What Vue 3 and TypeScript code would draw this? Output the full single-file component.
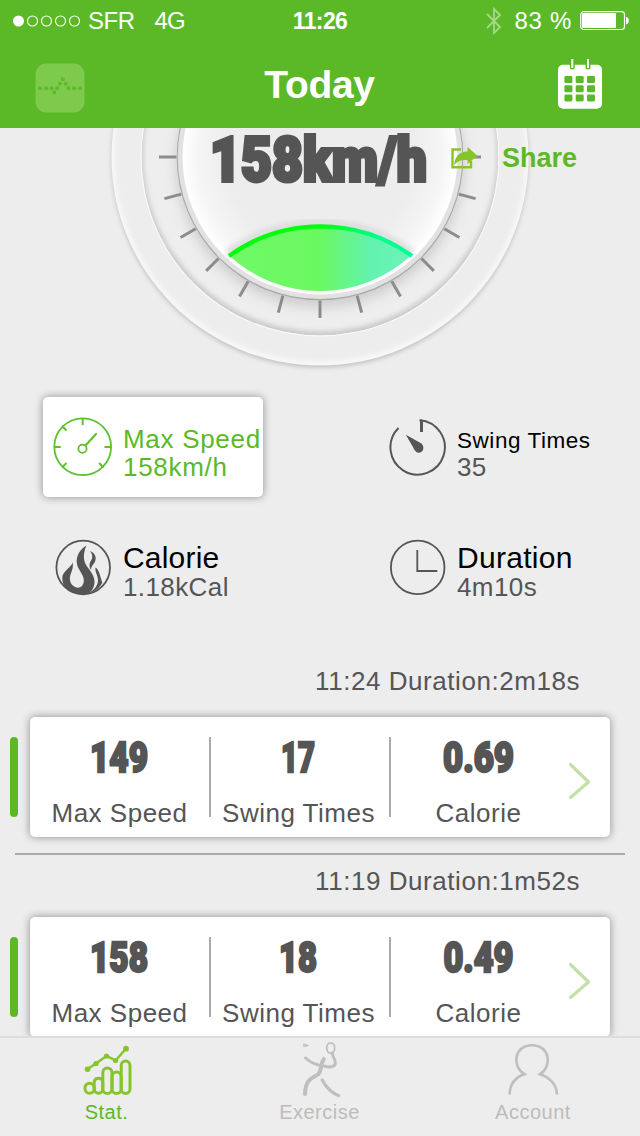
<script setup lang="ts">
interface Session {
  time: string
  duration: string
  speed: string
  speedWidth: number
  swings: string
  swingsWidth: number
  calorie: string
  calorieWidth: number
}

const sessions: Session[] = [
  { time: '11:24', duration: '2m18s', speed: '149', speedWidth: 58, swings: '17', swingsWidth: 34, calorie: '0.69', calorieWidth: 71 },
  { time: '11:19', duration: '1m52s', speed: '158', speedWidth: 58, swings: '18', swingsWidth: 38, calorie: '0.49', calorieWidth: 70 },
]

const ticks: number[] = Array.from({ length: 13 }, (_, i) => i * 15)

const pulse: number[][] = [
  [40, 88.3], [46, 88.3], [51.5, 88.3], [54.3, 92.6], [57.2, 88.3], [60, 83.8],
  [62.8, 79.3], [65.6, 83.8], [68.5, 88.3], [74.2, 88.3], [80, 88.3],
]
</script>

<template>
  <div class="phone">
    <header class="header">
      <div class="status">
        <div class="status-left">
          <svg width="68" height="14" viewBox="0 0 68 14">
            <circle cx="5.5" cy="7" r="5.5" fill="#fff" />
            <circle v-for="n in 4" :key="n" :cx="5.5 + n * 14" cy="7" r="5" fill="none" stroke="#fff" stroke-width="1.1" />
          </svg>
          <span class="carrier">SFR</span>
          <span class="network">4G</span>
        </div>
        <span class="clock">11:26</span>
        <div class="status-right">
          <svg class="bluetooth" width="16" height="28" viewBox="0 0 16 28">
            <path d="M1 7 L14 20 L8 26 V2 L14 8 L1 21" fill="none" stroke="#a4d98a" stroke-width="1.8" />
          </svg>
          <span class="percent">83 %</span>
          <svg width="50" height="20" viewBox="0 0 50 20">
            <rect x="0.7" y="0.7" width="43.8" height="17.8" rx="3" fill="none" stroke="#fff" stroke-width="1.2" />
            <rect x="2" y="2" width="34" height="15" rx="1" fill="#fff" />
            <path d="M46 6 h0.8 q2 0.6 2 3.6 t-2 3.6 h-0.8z" fill="#fff" />
          </svg>
        </div>
      </div>
      <div class="nav">
        <svg class="nav-icon pulse" width="52" height="52" viewBox="34 62 52 52">
          <rect x="35.5" y="63.5" width="49" height="49" rx="11" fill="#7eca4c" />
          <circle v-for="(p, i) in pulse" :key="i" :cx="p[0]" :cy="p[1]" r="2" fill="#5dbb2a" />
        </svg>
        <h1 class="title">Today</h1>
        <svg class="nav-icon calendar" width="46" height="52" viewBox="557 58 46 52">
          <rect x="558" y="64.7" width="44" height="44" rx="5" fill="#fff" />
          <path d="M572.3 62 V67 M588 62 V67" stroke="#5bb928" stroke-width="5" stroke-linecap="round" />
          <path d="M572.3 59 V68 M588 59 V68" stroke="#fff" stroke-width="2" />
          <g fill="#5bb928">
            <template v-for="r in 3" :key="r">
              <rect v-for="c in 3" :key="c" :x="553.1 + c * 11.3" :y="66.8 + r * 9.2" width="8" height="7" rx="1.3" />
            </template>
          </g>
        </svg>
      </div>
    </header>

    <main class="content">
      <section class="gauge">
        <svg width="640" height="257" viewBox="0 128 640 257">
          <defs>
            <filter id="soft" x="-10%" y="-10%" width="120%" height="120%"><feGaussianBlur stdDeviation="2.5" /></filter>
            <filter id="haze" x="-20%" y="-20%" width="140%" height="140%"><feGaussianBlur stdDeviation="7" /></filter>
            <radialGradient id="face" gradientUnits="userSpaceOnUse" cx="320" cy="157" r="138">
              <stop offset="0.68" stop-color="#ededed" />
              <stop offset="0.88" stop-color="#f5f5f5" />
              <stop offset="1" stop-color="#fff" />
            </radialGradient>
            <linearGradient id="wave" gradientUnits="userSpaceOnUse" x1="228" y1="0" x2="412" y2="0">
              <stop offset="0" stop-color="#70f968" />
              <stop offset="0.5" stop-color="#6af861" />
              <stop offset="0.78" stop-color="#63f2b1" />
              <stop offset="1" stop-color="#6df3b8" />
            </linearGradient>
            <linearGradient id="crest" gradientUnits="userSpaceOnUse" x1="228" y1="0" x2="412" y2="0">
              <stop offset="0.5" stop-color="#00ff08" />
              <stop offset="0.8" stop-color="#00ff88" />
              <stop offset="1" stop-color="#00ff95" />
            </linearGradient>
            <clipPath id="inner"><circle cx="320" cy="157" r="178.5" /></clipPath>
            <clipPath id="dial"><circle cx="320" cy="157" r="137" /></clipPath>
          </defs>
          <circle cx="320" cy="159" r="208" fill="#b8b8b8" filter="url(#soft)" />
          <circle cx="320" cy="157" r="208.5" fill="#f8f8f8" />
          <circle cx="320" cy="155.8" r="205.5" fill="#ededed" filter="url(#soft)" />
          <circle cx="320" cy="157" r="179.5" fill="#f9f9f9" />
          <g clip-path="url(#inner)">
            <circle cx="320" cy="157" r="178.5" fill="#c9c9c9" />
            <circle cx="320" cy="154.5" r="177" fill="#eeeeee" filter="url(#soft)" />
            <circle cx="320" cy="163" r="143" fill="#c8c8c8" filter="url(#haze)" />
          </g>
          <g stroke="#8c8c8c" stroke-width="3">
            <line v-for="a in ticks" :key="a" x1="463.5" y1="157" x2="481" y2="157" :transform="`rotate(${a} 320 157)`" />
          </g>
          <circle cx="320" cy="157" r="143.3" fill="#a8a8a8" />
          <circle cx="320" cy="156.8" r="142.3" fill="#e1e1e1" />
          <circle cx="320" cy="157" r="137.5" fill="url(#face)" />
          <g clip-path="url(#dial)">
            <path d="M228 253 A156 156 0 0 1 412 253" fill="none" stroke="#ddd" stroke-width="8" filter="url(#soft)" />
          </g>
          <path d="M228.5 255 A156 156 0 0 1 411.5 255 A134 134 0 0 1 228.5 255Z" fill="url(#wave)" />
          <path d="M229 256 A156 156 0 0 1 412 256" fill="none" stroke="url(#crest)" stroke-width="4.2" />
          <text class="heavy gauge-value" x="210" y="180.5" textLength="217" lengthAdjust="spacingAndGlyphs">158km/h</text>
        </svg>
        <button class="share">
          <svg width="28" height="24" viewBox="451 146 28 24">
            <path d="M461 149.5 H452.5 V167.2 H471 V161" fill="none" stroke="#86c52a" stroke-width="2.4" />
            <path d="M454 165 C455 157 459 151.5 467.5 151.5 V147 L477.5 155.7 L467.5 164 V160 C461 159.5 458 161 454 165Z" fill="#86c52a" />
          </svg>
          <span>Share</span>
        </button>
      </section>

      <section class="stats">
        <div class="stat active">
          <svg class="stat-icon" width="60" height="60" viewBox="53 417 60 60" fill="none" stroke="#5fc130" stroke-width="1.8">
            <circle cx="82.7" cy="446.8" r="28.4" />
            <path d="M82.7 418.5 v6.5 M54.3 447 h6.5 M111 447 h-6.5 M62 426 l4.5 4.5 M62 467.5 l4.5 -4.5 M103.5 467.5 l-4.5 -4.5" stroke-width="2" />
            <circle cx="82.5" cy="448.7" r="4.1" />
            <path d="M85.5 445.5 L96 434" stroke-width="2.2" stroke-linecap="round" />
          </svg>
          <div class="stat-text"><span class="name n26">Max Speed</span><span class="value speed">158km/h</span></div>
        </div>
        <div class="stat">
          <svg class="stat-icon" width="60" height="60" viewBox="387.5 417 60 60">
            <path d="M399 428 A27.2 27.2 0 1 0 420 420.2 H421.7 V432" fill="none" stroke="#565656" stroke-width="2" />
            <path d="M422 420 V432" stroke="#565656" stroke-width="3" />
            <path d="M406.3 434.8 L422 443.5 C425.5 447 424 452.8 419 452.8 C416 452.6 414.5 449 413 446.3Z" fill="#555" />
          </svg>
          <div class="stat-text"><span class="name n22">Swing Times</span><span class="value">35</span></div>
        </div>
        <div class="stat lower">
          <svg class="stat-icon" width="60" height="60" viewBox="53 538 60 60">
            <circle cx="83.2" cy="567.5" r="26.8" fill="none" stroke="#555" stroke-width="1.8" />
            <g fill="#555">
              <path d="M86.3 545.5 C80.5 549 75.5 556 77 564 C78 570 83.5 574 83.8 580 C84 585.5 80.5 588.5 76.5 587.5 C71.5 586 69.3 581.5 70 577 C70.8 572.5 73.5 569.5 72.8 562.5 C70.5 568 62.5 571.5 62.3 577.5 C62.2 583 64.5 587.5 68 590 C72 593 78 594.5 83 594.5 C89 594.3 93.5 591 94.5 583 C95 576 90 570.5 87 566.5 C82.5 560 83.5 553 86.3 545.5Z" />
              <path d="M90 551 C95.5 553 97.3 558.5 94.3 563 C92.3 565.5 91.2 567 91 570 C89 566.5 89 563.5 90.8 561 C93 558 92.8 554.5 90 551Z" />
              <path d="M95.4 567.5 C99.5 570 100 576.5 102.3 582.5 C100 588 94 592 88.5 593.3 C95 589.5 98.3 585 98 579.5 C97.7 575 95 572.5 95.4 567.5Z" />
            </g>
          </svg>
          <div class="stat-text"><span class="name n30">Calorie</span><span class="value">1.18kCal</span></div>
        </div>
        <div class="stat lower">
          <svg class="stat-icon" width="60" height="60" viewBox="387 538 60 60" fill="none" stroke="#555" stroke-width="1.8">
            <circle cx="417.7" cy="567.4" r="26.8" />
            <path d="M417.3 550 V571 H437.3" />
          </svg>
          <div class="stat-text"><span class="name n30 wide">Duration</span><span class="value">4m10s</span></div>
        </div>
      </section>

      <section class="sessions">
        <article v-for="s in sessions" :key="s.time" class="session">
          <p class="when">{{ s.time }} Duration:{{ s.duration }}</p>
          <div class="row">
            <i class="marker"></i>
            <div class="card">
              <div class="cell">
                <svg class="number" width="90" height="40"><text class="heavy figure" :x="44 - s.speedWidth / 2" y="35" :textLength="s.speedWidth" lengthAdjust="spacingAndGlyphs">{{ s.speed }}</text></svg>
                <span class="label">Max Speed</span>
              </div>
              <div class="cell">
                <svg class="number" width="90" height="40"><text class="heavy figure" :x="43 - s.swingsWidth / 2" y="35" :textLength="s.swingsWidth" lengthAdjust="spacingAndGlyphs">{{ s.swings }}</text></svg>
                <span class="label">Swing Times</span>
              </div>
              <div class="cell">
                <svg class="number" width="90" height="40"><text class="heavy figure" :x="44.5 - s.calorieWidth / 2" y="35" :textLength="s.calorieWidth" lengthAdjust="spacingAndGlyphs">{{ s.calorie }}</text></svg>
                <span class="label">Calorie</span>
              </div>
              <svg class="chevron" width="24" height="38" viewBox="0 0 24 38">
                <path d="M2.5 2.5 L20.5 20 L2.5 35.5" fill="none" stroke="#c4e0a6" stroke-width="3.2" stroke-linecap="round" stroke-linejoin="round" />
              </svg>
            </div>
          </div>
          <div class="rule"></div>
        </article>
      </section>
    </main>

    <nav class="tabs">
      <a class="tab current">
        <svg width="60" height="58" viewBox="77 1040 60 58" fill="none" stroke="#86c52a" stroke-width="3">
          <rect x="85" y="1083.3" width="9.2" height="10" rx="4.6" />
          <path d="M94.2 1089 V1081.5 a4.5 4.5 0 0 1 8.6 0 V1089 a4.3 4.3 0 0 1 -8.6 0Z" />
          <path d="M102.8 1089 V1072.5 a4.6 4.6 0 0 1 9.2 0 V1089 a4.5 4.5 0 0 1 -9.2 0Z" />
          <path d="M112 1089 V1076.7 a4.6 4.6 0 0 1 9.2 0 V1089 a4.5 4.5 0 0 1 -9.2 0Z" />
          <path d="M121.2 1089 V1065.5 a4.4 4.4 0 0 1 8.8 0 V1089 a4.3 4.3 0 0 1 -8.8 0Z" />
          <path d="M87.5 1069 L96 1063.5 L106.5 1056 L115.7 1060.5 L126 1048.5" stroke-width="2.4" />
          <g fill="#86c52a" stroke="none">
            <circle cx="87.5" cy="1069.3" r="2.8" /><circle cx="96" cy="1063.5" r="2.6" /><circle cx="106.5" cy="1056" r="2.6" /><circle cx="115.5" cy="1060.5" r="2.6" /><circle cx="126" cy="1048.7" r="2.9" />
          </g>
        </svg>
        <span>Stat.</span>
      </a>
      <a class="tab">
        <svg width="60" height="58" viewBox="290 1040 60 58" fill="none" stroke="#bfbfbf" stroke-width="4" stroke-linecap="round">
          <path d="M305.5 1058 C311 1063 317 1065.5 324 1066 C331 1068 336 1066.5 335.2 1062 C334.8 1058 332 1056.5 332.5 1053" stroke-width="3" />
          <path d="M323.8 1059 C320 1064 322 1070 318.5 1074 C313 1078.5 305.5 1078 305 1094" />
          <path d="M322.2 1080 C326 1087 331.5 1093 338.5 1095.5" stroke-width="3.4" />
          <ellipse cx="330.7" cy="1048" rx="4" ry="5.1" stroke-width="1.8" />
          <path d="M303.7 1044.3 v2.5 l4.5 -1.2Z" stroke-width="1" fill="#d0d0d0" />
        </svg>
        <span>Exercise</span>
      </a>
      <a class="tab">
        <svg width="60" height="58" viewBox="503 1040 60 58" fill="none" stroke="#bfbfbf" stroke-width="2.6">
          <path d="M509.5 1094.5 C510 1084 515.5 1077 524.5 1074.2 C511 1066 514.5 1045.2 532 1045.2 C549.5 1045.2 553 1066 540 1074.2 C549 1077 556.5 1084 557 1094.5" />
        </svg>
        <span>Account</span>
      </a>
    </nav>
  </div>
</template>

<style>
body {
  background: #ededed;
}
</style>

<style scoped>
.phone {
  width: 640px;
  height: 1136px;
  display: flex;
  flex-direction: column;
  overflow: hidden;
  background: #ededed;
  font-family: 'Liberation Sans', Arial, sans-serif;
  color: #555;
}
svg {
  display: block;
  flex: none;
}
.header {
  flex: none;
  height: 128px;
  background: #5bb928;
  color: #fff;
}
.status {
  display: grid;
  grid-template-columns: 1fr 60px 1fr;
  align-items: center;
  height: 41px;
  font-size: 24px;
  line-height: 41px;
  white-space: nowrap;
}
.status-left {
  display: flex;
  align-items: center;
  padding-left: 13px;
}
.carrier {
  margin-left: 7px;
  letter-spacing: -0.5px;
}
.network {
  margin-left: 20px;
  letter-spacing: -0.8px;
}
.clock {
  font-size: 23px;
  font-weight: bold;
  line-height: 40px;
  padding-top: 1px;
  text-align: center;
  letter-spacing: -0.6px;
}
.status-right {
  display: flex;
  align-items: center;
  justify-content: flex-end;
  padding-right: 10px;
}
.percent {
  margin: 0 8px 0 12px;
  letter-spacing: 0.7px;
}
.nav {
  display: flex;
  align-items: flex-start;
  justify-content: space-between;
  height: 87px;
  padding: 0 37px 0 34px;
}
.title {
  margin: 0 0 0 -4px;
  font-size: 39px;
  line-height: 88px;
  letter-spacing: -0.3px;
}
.pulse {
  margin-top: 21px;
}
.calendar {
  margin-top: 17px;
}
.content {
  flex: 1;
  min-height: 0;
  overflow: hidden;
}
.gauge {
  position: relative;
  height: 257px;
}
.heavy {
  font-family: Roboto, 'Liberation Sans', sans-serif;
  font-weight: 900;
  fill: #555;
  stroke: #555;
}
.gauge-value {
  font-size: 62px;
  stroke-width: 4px;
}
.figure {
  font-size: 42px;
  stroke-width: 2.4px;
}
.number {
  overflow: visible;
}
.share {
  position: absolute;
  left: 451px;
  top: 15px;
  display: flex;
  align-items: center;
  gap: 23px;
  padding: 0;
  border: 0;
  background: none;
  color: #5bb928;
  font: bold 27px/30px 'Liberation Sans', Arial, sans-serif;
}
.stats {
  display: grid;
  grid-template-columns: 220px 220px;
  column-gap: 114px;
  row-gap: 20px;
  padding: 12px 0 0 43px;
}
.stat {
  display: flex;
  height: 100px;
  box-sizing: border-box;
  padding: 20px 0 0 10px;
  border-radius: 5px;
  white-space: nowrap;
}
.stat.lower {
  padding-top: 21px;
}
.active {
  background: #fff;
  box-shadow: 0 0 8px rgba(0, 0, 0, 0.4);
}
.stat-text {
  display: flex;
  flex-direction: column;
  margin-left: 10px;
  padding-top: 7px;
}
.lower .stat-text {
  padding-top: 5px;
}
.name {
  color: #000;
  height: 29px;
  line-height: 30px;
}
.n26 {
  font-size: 26px;
  letter-spacing: 0.7px;
}
.n22 {
  font-size: 22.5px;
  line-height: 34px;
  letter-spacing: 0.55px;
}
.n30 {
  height: 30px;
  font-size: 30px;
  letter-spacing: 0.2px;
}
.wide {
  letter-spacing: 0.3px;
}
.value {
  font-size: 26px;
  line-height: 28px;
  letter-spacing: 0.4px;
}
.speed {
  letter-spacing: 0.7px;
}
.active .name,
.active .value {
  color: #5bb928;
}
.sessions {
  padding-top: 48px;
}
.session {
  height: 200px;
}
.when {
  margin: 0;
  padding-right: 60px;
  text-align: right;
  font-size: 26px;
  line-height: 32px;
  height: 52px;
  letter-spacing: 0.55px;
}
.row {
  display: flex;
  align-items: center;
  padding-left: 10px;
}
.marker {
  width: 8px;
  height: 80px;
  border-radius: 4px;
  background: #5bb928;
}
.card {
  display: grid;
  grid-template-columns: 180px 180px 177px 1fr;
  width: 580px;
  height: 120px;
  margin-left: 12px;
  border-radius: 5px;
  background: #fff;
  box-shadow: 0 0 8px rgba(0, 0, 0, 0.42);
}
.cell {
  display: flex;
  flex-direction: column;
  align-items: center;
  height: 80px;
  margin-top: 20px;
  white-space: nowrap;
}
.cell:nth-child(1),
.cell:nth-child(2) {
  box-shadow: 1px 0 #aaa, inset -1px 0 #aaa;
}
.cell:nth-child(1) .label {
  margin-right: 1px;
}
.cell:nth-child(2) .label {
  margin-right: 3px;
}
.label {
  font-size: 26px;
  line-height: 32px;
  margin-top: 20px;
  letter-spacing: 0.5px;
}
.chevron {
  margin-top: 45px;
  margin-left: 1px;
}
.rule {
  height: 2px;
  margin: 16px 15px 0;
  background: #aaa;
}
.tabs {
  flex: none;
  display: grid;
  grid-template-columns: 213px 213px 214px;
  height: 100px;
  box-sizing: border-box;
  border-top: 2px solid #dedede;
  background: #ededed;
}
.tab {
  display: flex;
  flex-direction: column;
  align-items: center;
  padding-top: 2px;
  color: #bcbcbc;
  font-size: 20px;
  line-height: 28px;
  letter-spacing: 0.5px;
}
.current {
  color: #5bb928;
}
</style>
